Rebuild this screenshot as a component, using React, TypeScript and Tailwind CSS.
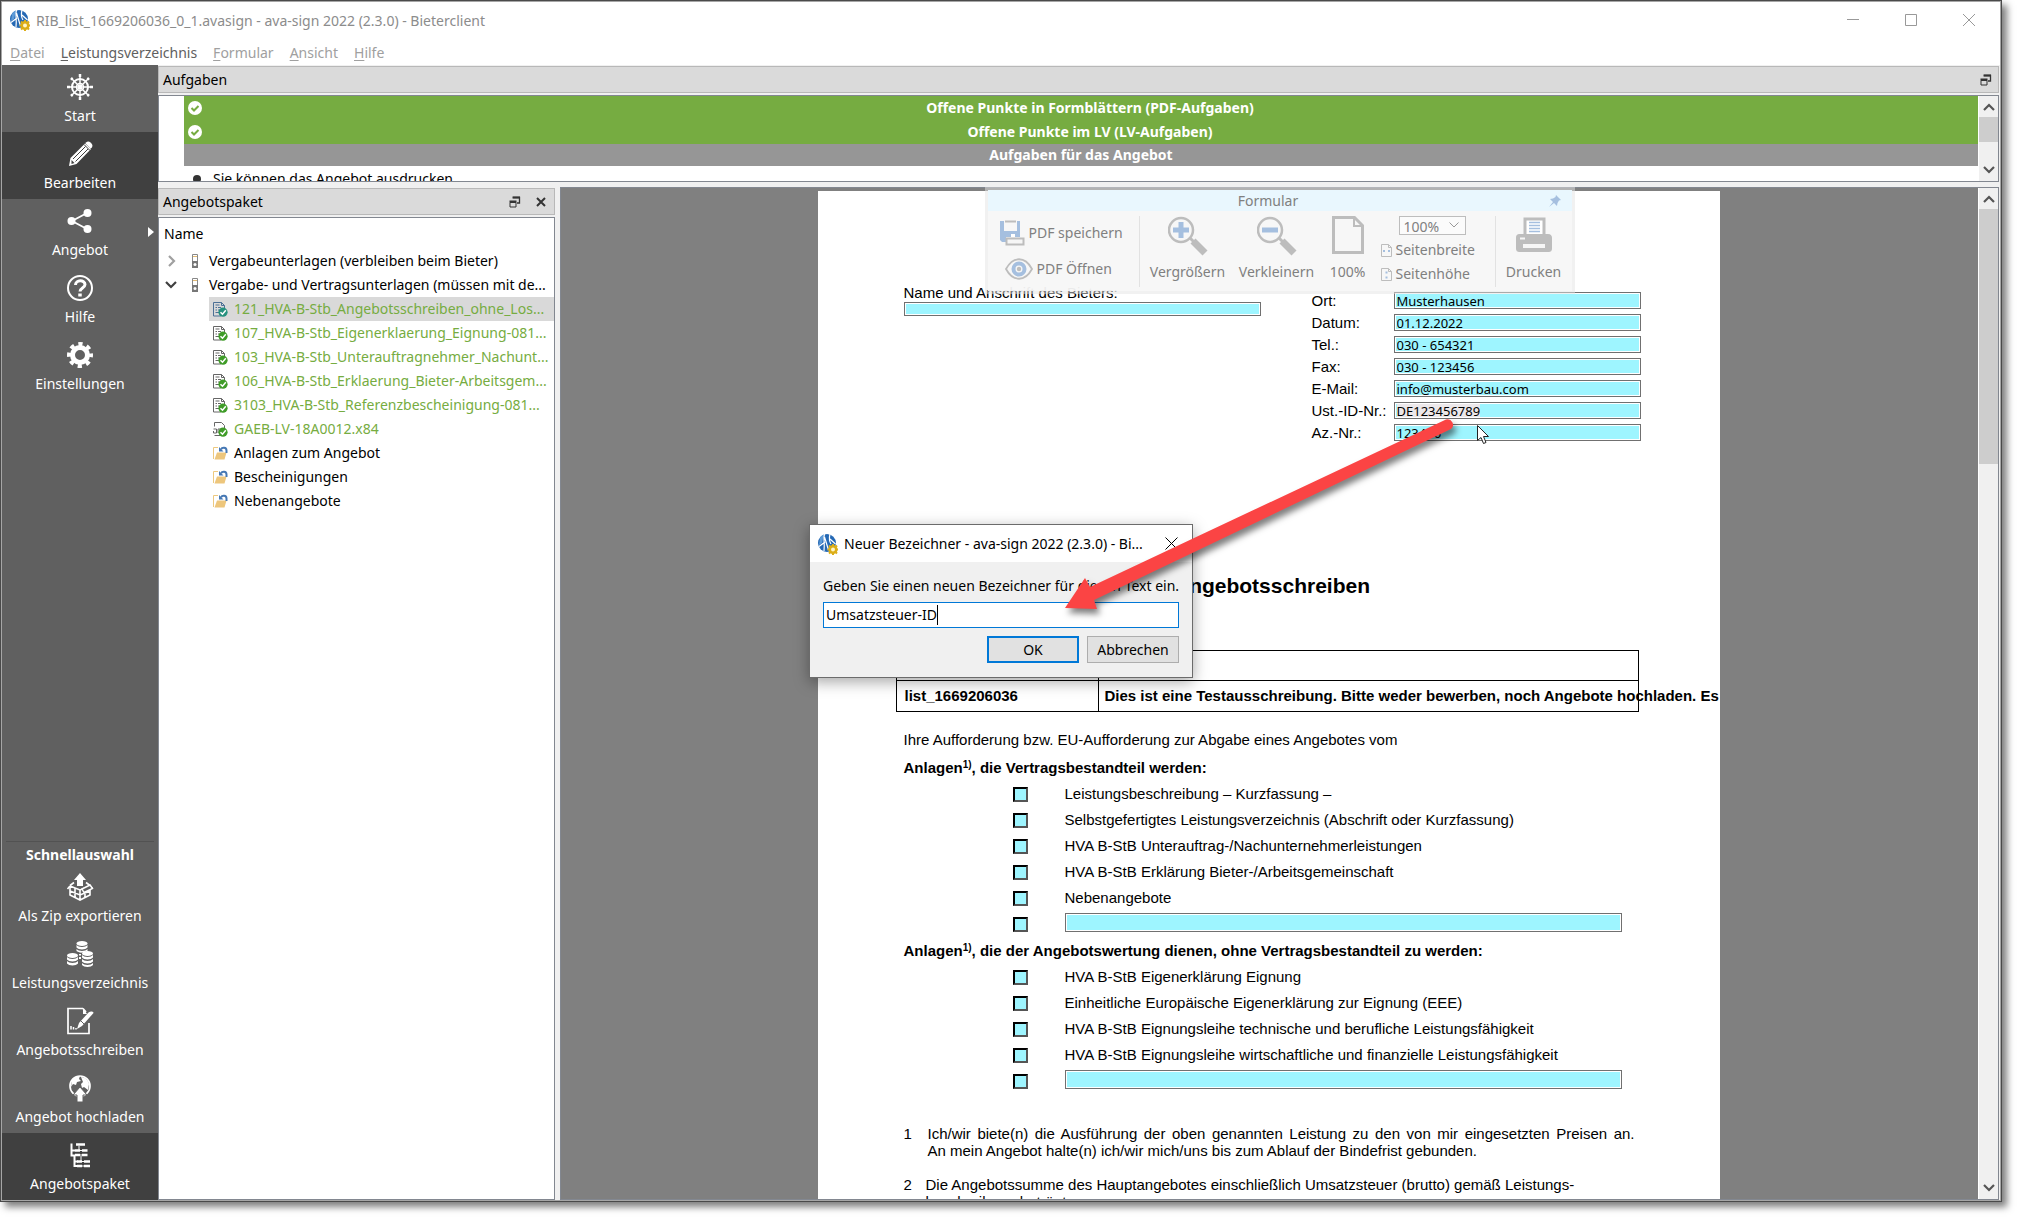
import { useState } from "react";
import type { ReactNode } from "react";

const menuItems = [
  { key: "D", rest: "atei", active: false },
  { key: "L", rest: "eistungsverzeichnis", active: true },
  { key: "F", rest: "ormular", active: false },
  { key: "A", rest: "nsicht", active: false },
  { key: "H", rest: "ilfe", active: false },
];

const openFiles = [
  "121_HVA-B-Stb_Angebotsschreiben_ohne_Los...",
  "107_HVA-B-Stb_Eigenerklaerung_Eignung-081...",
  "103_HVA-B-Stb_Unterauftragnehmer_Nachunt...",
  "106_HVA-B-Stb_Erklaerung_Bieter-Arbeitsgem...",
  "3103_HVA-B-Stb_Referenzbescheinigung-081...",
];

const folders = ["Anlagen zum Angebot", "Bescheinigungen", "Nebenangebote"];

const bidderFields = [
  { label: "Ort:", value: "Musterhausen" },
  { label: "Datum:", value: "01.12.2022" },
  { label: "Tel.:", value: "030 - 654321" },
  { label: "Fax:", value: "030 - 123456" },
  { label: "E-Mail:", value: "info@musterbau.com" },
  { label: "Ust.-ID-Nr.:", value: "DE123456789", marked: true },
  { label: "Az.-Nr.:", value: "123456" },
];

const contractParts = [
  "Leistungsbeschreibung – Kurzfassung –",
  "Selbstgefertigtes Leistungsverzeichnis (Abschrift oder Kurzfassung)",
  "HVA B-StB Unterauftrag-/Nachunternehmerleistungen",
  "HVA B-StB Erklärung Bieter-/Arbeitsgemeinschaft",
  "Nebenangebote",
];

const ratingParts = [
  "HVA B-StB Eigenerklärung Eignung",
  "Einheitliche Europäische Eigenerklärung zur Eignung (EEE)",
  "HVA B-StB Eignungsleihe technische und berufliche Leistungsfähigkeit",
  "HVA B-StB Eignungsleihe wirtschaftliche und finanzielle Leistungsfähigkeit",
];

/* ---------- icons ---------- */

function AppIcon() {
  return (
    <svg viewBox="0 0 20 22" className="w-5 h-[22px] shrink-0">
      <circle cx="9" cy="10" r="9" fill="#2468b4" />
      <path d="M2 5c1-2 2-3 4-3.500L4 10 1 12z" fill="#5d9bd8" />
      <path d="M6.500 1C5 5 7 9 6 18M12 1c-1 4-1 7 1 10M1 13.500l6-4.500M6.500 4l4 13M12 6l5.500 5" stroke="#fff" strokeWidth="1.200" fill="none" />
      <circle cx="15" cy="16.500" r="4.500" fill="#dcae18" />
      <path d="M15 11v11M9.500 16.500h11M11 12.500l8 8M19 12.500l-8 8" stroke="#dcae18" strokeWidth="2" />
      <circle cx="15" cy="16.500" r="2" fill="#fff6c8" />
    </svg>
  );
}

function SideIcon({ children }: { children: ReactNode }) {
  return (
    <svg viewBox="0 0 28 28" className="w-7 h-7" fill="none" stroke="#fff" strokeWidth="2">
      {children}
    </svg>
  );
}

const wheelIcon = (
  <SideIcon>
    <circle cx="14" cy="14" r="8" />
    <circle cx="14" cy="14" r="3.500" strokeWidth="1.500" />
    <path d="M14 2v24M2 14h24M5.500 5.500l17 17M22.500 5.500l-17 17" strokeWidth="1.500" />
    <path d="M14 1v3M14 24v3M1 14h3M24 14h3M5 5l1.500 1.500M21.500 21.500L23 23M23 5l-1.500 1.500M6.500 21.500L5 23" strokeWidth="2.500" />
  </SideIcon>
);

const pencilIcon = (
  <SideIcon>
    <path d="M3 26l1.500-8L19 3.500l6 5.500L10.500 24z" fill="#fff" stroke="none" />
    <path d="M20 2.500c1.500-1.500 3-1.500 4.500 0l1 1c1.500 1.500 1 3 0 4.500l-1 .5-5-5z" fill="#fff" stroke="none" />
    <path d="M7 19L19.500 6.500M9.500 21.500L22 9M18 4.500l6 6" stroke="#404040" strokeWidth="1" />
    <path d="M5.500 20l3 3-3 1z" fill="#404040" stroke="none" />
  </SideIcon>
);

const shareIcon = (
  <SideIcon>
    <path d="M21 6L6 14l15 8" strokeWidth="1.800" />
    <circle cx="21.500" cy="6" r="4" fill="#fff" stroke="none" />
    <circle cx="5.500" cy="14" r="4" fill="#fff" stroke="none" />
    <circle cx="21.500" cy="22" r="4" fill="#fff" stroke="none" />
  </SideIcon>
);

const helpIcon = (
  <SideIcon>
    <circle cx="14" cy="14" r="12" />
    <path d="M9.500 11c0-5.500 9.500-5.500 9.500-.5 0 3.500-5 3.500-5 7" strokeWidth="3" />
    <path d="M14 19.500v3" strokeWidth="3.500" />
  </SideIcon>
);

const gearIcon = (
  <SideIcon>
    <circle cx="14" cy="14" r="7.500" strokeWidth="5" />
    <circle cx="14" cy="14" r="11" strokeWidth="4" strokeDasharray="4.200 4.440" strokeDashoffset="2" />
  </SideIcon>
);

const zipIcon = (
  <SideIcon>
    <path d="M4 13v9l10 5 10-5v-9M14 17v10M4 13l10 4 10-4M4 18l10 4 10-4M9 15v9M19 15v9" strokeWidth="1.600" />
    <path d="M4 13L1.500 16M4 12.500l4-3M24 12.500l-4-3M24 12.500l2.500 3" strokeWidth="1.600" />
    <path d="M14 0l6 7h-3v6h-6V7H8z" fill="#fff" stroke="none" />
    <path d="M16 16l8-4 2.500 3.500-8.500 4z" fill="#606060" strokeWidth="1.400" />
  </SideIcon>
);

const coinsIcon = (
  <SideIcon>
    <g fill="#fff" stroke="none">
      <ellipse cx="16" cy="3.500" rx="5.500" ry="2.500" />
      <path d="M10.500 5c2 2.500 9 2.500 11 0v2.500c-2 2.500-9 2.500-11 0zM10.500 9c2 2.500 9 2.500 11 0v2c-2 1-3 1-5 1.500-2 .5-5-.5-6-1.500z" />
      <ellipse cx="6.500" cy="15.500" rx="5.500" ry="2.500" />
      <path d="M1 17c2 2.500 9 2.500 11 0v2.500c-2 2.500-9 2.500-11 0zM1 21c2 2.500 9 2.500 11 0v2.500c-2 2.500-9 2.500-11 0z" />
      <ellipse cx="21.500" cy="13.500" rx="5.500" ry="2.500" />
      <path d="M16 15c2 2.500 9 2.500 11 0v2.500c-2 2.500-9 2.500-11 0zM16 19c2 2.500 9 2.500 11 0v2.500c-2 2.500-9 2.500-11 0zM16 23c2 2.500 9 2.500 11 0v2c-2 2.500-9 2.500-11 0z" />
      <path d="M13 14h2v1.500h-2zM13 17h2v2h-2z" />
    </g>
  </SideIcon>
);

const letterIcon = (
  <SideIcon>
    <path d="M17 1.500H2v25h21V16M17 1.500L20 5" strokeWidth="1.700" />
    <path d="M17 1v6h4z" fill="#fff" stroke="none" />
    <path d="M11 22l2-6L22.500 5.500c2-1.500 5-1 5 .5L16 19z" fill="#fff" stroke="none" />
    <path d="M14 13l4 4" stroke="#606060" strokeWidth="1" />
    <path d="M5 19v3.500M7.500 20v2.500M10 21v1.500" strokeWidth="1.500" />
  </SideIcon>
);

const uploadIcon = (
  <SideIcon>
    <circle cx="14" cy="12" r="10" strokeWidth="1.700" />
    <path d="M6 6c2-3 5-4 8-4l-1 3 2 2-4 1-1 3-3-1-2 3zM15 3c4 0 7 3 8 7l-1 6-4-3-2 1-1-4 2-2z" fill="#fff" stroke="none" />
    <path d="M14 13l7 8h-4v7h-6v-7H7z" fill="#fff" stroke="#606060" strokeWidth="1" />
  </SideIcon>
);

const treeIcon = (
  <SideIcon>
    <path d="M5.500 2.500v13M5 9.500h4M5 14.500h4M8.500 15v11M8 20.500h4M8 25h4" strokeWidth="2" />
    <path d="M10 3.500h9M9 9.500h5M16 9.500h5.500M9 14h5M16 14h5.500M11 20.500h5M18 20.500h6M11 25h5M18 25h6" strokeWidth="2.600" />
    <path d="M14 9.500h2M14 14h2M16 20.500h2M16 25h2M13 5v4M15 15v5" strokeWidth="1" />
  </SideIcon>
);

function ChevronIcon({ dir, color }: { dir: "up" | "down" | "right"; color: string }) {
  const d = { up: "M1 9l5-5 5 5", down: "M1 3l5 5 5-5", right: "M4 1l5 5-5 5" }[dir];
  return (
    <svg viewBox="0 0 12 12" className="w-3 h-3" fill="none" stroke={color} strokeWidth="2.200">
      <path d={d} />
    </svg>
  );
}

function FloatIcon() {
  return (
    <svg viewBox="0 0 12 12" className="w-3 h-3" fill="none" stroke="#333">
      <path d="M4 1.500h6.500v5.500H8" strokeWidth="1.300" />
      <path d="M1 6.500h6v4.500H1z" />
      <path d="M0.500 5.500h7M3.500 1.500h7.500" strokeWidth="2.200" />
    </svg>
  );
}

function CheckBadge() {
  return (
    <svg viewBox="0 0 14 14" className="w-[14px] h-[14px]">
      <circle cx="7" cy="7" r="7" fill="#fff" />
      <path d="M3.500 7l2.500 2.500 4.500-4.500" stroke="#76ac41" strokeWidth="2" fill="none" />
    </svg>
  );
}

function FileIcon({ selected = false, gaeb = false }: { selected?: boolean; gaeb?: boolean }) {
  const line = selected ? "#4c7096" : "#666";
  return (
    <svg viewBox="0 0 15 15" className="w-[15px] h-[15px] shrink-0" fill="none">
      {gaeb ? (
        <path d="M1.500 4.500v-4h7l3 3v3M0.500 7h3v4h-3V9M5 11V7h3M1.500 13.500h6" stroke={line} />
      ) : (
        <path d="M8 14H0.500V0.500h8l3 3V6M8.500 .5v3h3M2.500 3h4M2.500 5.500h1.500M5 5.500h3M2.500 8h1.500M5 8h2M2.500 10.500h4" stroke={line} />
      )}
      <circle cx="10" cy="10.200" r="4.600" fill={selected ? "#26917e" : "#3f9c28"} />
      <path d="M7.500 10.200l2 2 3.300-4" stroke="#fff" strokeWidth="1.500" />
    </svg>
  );
}

function FolderIcon() {
  return (
    <svg viewBox="0 0 15 14" className="w-[15px] h-[14px] shrink-0">
      <path d="M0.500 13V1.500h4.500" fill="none" stroke="#edc980" />
      <path d="M1.500 13.500L4 6.500h9.500l-2 7z" fill="#edc67c" />
      <path d="M8 3.500c1-2.500 5.500-2.500 5.500 1V7" fill="none" stroke="#4678b4" strokeWidth="2" />
      <path d="M6 1v4.500h4.500z" fill="#4678b4" />
    </svg>
  );
}

function BinderIcon() {
  return (
    <svg viewBox="0 0 6 14" className="w-[6px] h-[14px] shrink-0">
      <path d="M0.500 0.500h5v13h-5z" fill="#fff" stroke="#888" />
      <path d="M1 2.500h4" stroke="#e3ba72" />
      <path d="M0 7h6v7H0z" fill="#777" />
      <circle cx="3" cy="10.500" r="1.500" fill="#fff" />
    </svg>
  );
}

function ZoomIcon({ plus = false }: { plus?: boolean }) {
  return (
    <svg viewBox="0 0 40 40" className="w-10 h-10" fill="none">
      <circle cx="13" cy="14" r="12" stroke="#bdbdbd" strokeWidth="2.500" />
      <path d="M22 22l4 4" stroke="#bdbdbd" strokeWidth="3" />
      <path d="M25 25l12 12" stroke="#bdbdbd" strokeWidth="7" />
      <path d="M5 14h16" stroke="#a5bfdf" strokeWidth="5" />
      {plus && <path d="M13 6v16" stroke="#a5bfdf" strokeWidth="5" />}
    </svg>
  );
}

function PageIcon() {
  return (
    <svg viewBox="0 0 32 38" className="w-8 h-[38px]" fill="none" stroke="#bdbdbd" strokeWidth="3">
      <path d="M1.500 1.500h21l8 8v27h-29z" />
      <path d="M22 2v8h8" strokeWidth="2" />
    </svg>
  );
}

function FitIcon({ vertical = false }: { vertical?: boolean }) {
  return (
    <svg viewBox="0 0 11 13" className="w-[11px] h-[13px]" fill="none" stroke="#bdbdbd">
      <path d="M.5 .5h7l3 3v9H.5zM7.500 .5v3h3" />
      <path d={vertical ? "M5.500 3.500v2M5.500 8.500v2" : "M2 7h2M7 7h2"} stroke="#a5bfdf" strokeWidth="2" />
    </svg>
  );
}

function PrinterIcon() {
  return (
    <svg viewBox="0 0 38 36" className="w-[38px] h-9">
      <path d="M10 18V2h19v16" fill="#fff" stroke="#bdbdbd" strokeWidth="3" />
      <path d="M14 5.500h11M14 8.500h11M14 11.500h11M14 14.500h11" stroke="#a5bfdf" strokeWidth="1.500" />
      <path d="M5 17h28c3 0 4 2 4 4v10c0 3-1 4-4 4H5c-3 0-4-1-4-4V21c0-3 1-4 4-4z" fill="#bdbdbd" />
      <path d="M8 27h22v4H8z" fill="#f6f6f6" />
      <path d="M5 21.500h5" stroke="#f6f6f6" strokeWidth="2" />
    </svg>
  );
}

function SaveIcon() {
  return (
    <svg viewBox="0 0 26 26" className="w-[26px] h-[26px]">
      <path d="M1 1h4v10h13V1h3v16H7v5H3l-2-2z" fill="#a5bfdf" />
      <path d="M6 1.500h11" stroke="#bdbdbd" strokeWidth="2" />
      <path d="M12 14h4v3h-4z" fill="#fff" />
      <path d="M7.500 18.500h17v6h-17z" fill="#f6f6f6" stroke="#bdbdbd" strokeWidth="2" />
    </svg>
  );
}

function EyeIcon() {
  return (
    <svg viewBox="0 0 28 22" className="w-7 h-[22px]" fill="none">
      <path d="M1 11C8-2 20-2 27 11 20 24 8 24 1 11z" stroke="#bdbdbd" strokeWidth="1.800" />
      <circle cx="14" cy="11" r="5.500" stroke="#a5bfdf" strokeWidth="4" />
      <circle cx="14" cy="11" r="2.200" fill="#bdbdbd" />
    </svg>
  );
}

/* ---------- shared pieces ---------- */

function SideButton({ icon, label, active = false }: { icon: ReactNode; label: string; active?: boolean }) {
  return (
    <button
      className={`w-full h-[67px] flex flex-col items-center pt-2 gap-[3px] text-white whitespace-nowrap ${active ? "bg-[#404040]" : ""}`}
    >
      {icon}
      <span className="leading-6">{label}</span>
    </button>
  );
}

function ScrollBar({ thumb }: { thumb: string }) {
  return (
    <div className="w-5 shrink-0 bg-[#f0f0f0] border-l border-white flex flex-col items-center">
      <div className="h-[21px] flex items-center">
        <ChevronIcon dir="up" color="#555" />
      </div>
      <div className={`w-full bg-[#cdcdcd] ${thumb}`} />
      <div className="mt-auto h-[22px] flex items-center">
        <ChevronIcon dir="down" color="#555" />
      </div>
    </div>
  );
}

function DockTitle({ title, closable = false }: { title: string; closable?: boolean }) {
  return (
    <div
      className={`h-[27px] shrink-0 flex items-center bg-[#dadada] border border-[#b8b8b8] pl-1 text-black ${closable ? "pr-2" : "pr-[6px]"}`}
    >
      <span className="flex-1 pt-px">{title}</span>
      <button aria-label="Abdocken">
        <FloatIcon />
      </button>
      {closable && (
        <button aria-label="Schließen" className="ml-[15px]">
          <svg viewBox="0 0 10 10" className="w-[10px] h-[10px]" stroke="#333" strokeWidth="2">
            <path d="M1 1l8 8M9 1L1 9" />
          </svg>
        </button>
      )}
    </div>
  );
}

function Sidebar() {
  return (
    <nav className="w-[156px] shrink-0 bg-[#606060] flex flex-col">
      <SideButton icon={wheelIcon} label="Start" />
      <SideButton icon={pencilIcon} label="Bearbeiten" active />
      <div className="relative">
        <SideButton icon={shareIcon} label="Angebot" />
        <span className="absolute right-1 top-7 border-y-[5px] border-y-transparent border-l-[6px] border-l-white" />
      </div>
      <SideButton icon={helpIcon} label="Hilfe" />
      <SideButton icon={gearIcon} label="Einstellungen" />
      <div className="mt-auto border-t border-[#525252] mx-1 pt-[3px] h-6 flex items-center justify-center font-bold text-white">
        Schnellauswahl
      </div>
      <SideButton icon={zipIcon} label="Als Zip exportieren" />
      <SideButton icon={coinsIcon} label="Leistungsverzeichnis" />
      <SideButton icon={letterIcon} label="Angebotsschreiben" />
      <SideButton icon={uploadIcon} label="Angebot hochladen" />
      <SideButton icon={treeIcon} label="Angebotspaket" active />
    </nav>
  );
}

function TaskPanel() {
  return (
    <section className="flex flex-col gap-[2px]">
      <DockTitle title="Aufgaben" />
      <div className="h-[87px] flex border border-[#828790] bg-white">
        <ul className="flex-1 pl-[25px] overflow-hidden text-center font-bold text-white">
          <li className="h-6 flex items-center bg-[#76ac41] pl-1 pb-px">
            <CheckBadge />
            <span className="flex-1">Offene Punkte in Formblättern (PDF-Aufgaben)</span>
          </li>
          <li className="h-6 flex items-center bg-[#76ac41] pl-1 pb-px">
            <CheckBadge />
            <span className="flex-1">Offene Punkte im LV (LV-Aufgaben)</span>
          </li>
          <li className="h-[22px] flex items-center justify-center bg-[#969696]">Aufgaben für das Angebot</li>
          <li className="h-6 flex items-center gap-3 pl-[9px] pt-px text-black font-normal">
            <span className="w-2 h-2 rounded-full bg-[#333]" />
            Sie können das Angebot ausdrucken
          </li>
        </ul>
        <ScrollBar thumb="h-[25px]" />
      </div>
    </section>
  );
}

function PackageTree() {
  return (
    <section className="w-[397px] shrink-0 flex flex-col gap-[2px] pt-px">
      <DockTitle title="Angebotspaket" closable />
      <div className="flex-1 min-h-0 overflow-hidden border border-[#828790] bg-white text-black whitespace-nowrap">
        <div className="h-[31px] flex items-center pl-[5px]">Name</div>
        <ul>
          <li>
            <button className="h-6 flex items-center pl-[6px]">
              <ChevronIcon dir="right" color="#a0a0a0" />
              <span className="w-[15px]" />
              <BinderIcon />
              <span className="pl-[11px]">Vergabeunterlagen (verbleiben beim Bieter)</span>
            </button>
          </li>
          <li>
            <button className="h-6 flex items-center pl-[6px]">
              <ChevronIcon dir="down" color="#404040" />
              <span className="w-[15px]" />
              <BinderIcon />
              <span className="pl-[11px]">Vergabe- und Vertragsunterlagen (müssen mit de...</span>
            </button>
            <ul className="pl-[50px]">
              {openFiles.map((file, i) => (
                <li key={file} className={i === 0 ? "bg-[#d9d9d9]" : ""}>
                  <button className="h-6 flex items-center gap-[6px] pl-1 text-[#76ac41]">
                    <FileIcon selected={i === 0} />
                    {file}
                  </button>
                </li>
              ))}
              <li>
                <button className="h-6 flex items-center gap-[6px] pl-1 text-[#76ac41]">
                  <FileIcon gaeb />
                  GAEB-LV-18A0012.x84
                </button>
              </li>
              {folders.map((folder) => (
                <li key={folder}>
                  <button className="h-6 flex items-center gap-[6px] pl-1">
                    <FolderIcon />
                    {folder}
                  </button>
                </li>
              ))}
            </ul>
          </li>
        </ul>
      </div>
    </section>
  );
}

/* ---------- PDF page ---------- */

function AttachmentList({ name, items }: { name: string; items: string[] }) {
  return (
    <ul className="mt-[3px] pl-[109px]">
      {items.map((item) => (
        <li key={item} className="h-[26px]">
          <label className="h-full flex items-center gap-[37px]">
            <input type="checkbox" className="appearance-none w-[15px] h-[15px] border-2 border-black border-r-[#555] border-b-[#555] bg-[#9ef5ff]" />
            {item}
          </label>
        </li>
      ))}
      <li className="h-[26px] flex items-center gap-[37px]">
        <input type="checkbox" aria-label={`${name} weitere`} className="appearance-none w-[15px] h-[15px] border-2 border-black border-r-[#555] border-b-[#555] bg-[#9ef5ff]" />
        <input aria-label={name} className="w-[557px] h-[19px] mb-1 border border-[#707070] bg-[#9ef5ff] shadow-[inset_0_0_0_1px_white]" />
      </li>
    </ul>
  );
}

function PdfPage() {
  return (
    <article className="w-[902px] shrink-0 bg-white mt-[3px] mr-[2px] pl-[86px] pr-[79px] pt-[93px] overflow-hidden text-[15px] leading-5 text-black font-['Liberation_Sans',Arial,sans-serif]">
      <div className="flex justify-between items-start">
        <div className="flex flex-col">
          <label htmlFor="bidder" className="leading-[18px]">
            Name und Anschrift des Bieters:
          </label>
          <input id="bidder" className="w-[357px] h-[14px] border border-[#707070] bg-[#9ef5ff] shadow-[inset_0_0_0_1px_white]" />
        </div>
        <div className="mt-2 flex flex-col gap-[5px]">
          {bidderFields.map(({ label, value, marked }) => (
            <div key={label} className="flex items-center h-[17px]">
              <label htmlFor={label} className="w-[82px]">
                {label}
              </label>
              <div className="w-[247px] h-[17px] flex items-center border border-[#707070] bg-[#9ef5ff] shadow-[inset_0_0_0_1px_white] overflow-hidden">
                <input
                  id={label}
                  defaultValue={value}
                  className={`ml-[2px] h-[13px] text-[13px] leading-[13px] font-['Noto_Sans','Open_Sans',sans-serif] ${marked ? "field-sizing-content bg-[#ece8ea]" : "flex-1 min-w-0"}`}
                />
              </div>
            </div>
          ))}
        </div>
      </div>

      <h1 className="mt-[132px] text-center text-[21px] leading-[26px] font-bold">Angebotsschreiben</h1>

      <table className="mt-[51px] -ml-2 w-[743px] table-fixed border-collapse font-bold whitespace-nowrap">
        <tbody>
          <tr className="h-[30px]">
            <td className="w-[202px] border border-black" />
            <td className="border border-black" />
          </tr>
          <tr className="h-[31px]">
            <td className="border border-black pl-2">list_1669206036</td>
            <td className="border border-black pl-[6px]">
              Dies ist eine Testausschreibung. Bitte weder bewerben, noch Angebote hochladen. Es wird
            </td>
          </tr>
        </tbody>
      </table>

      <p className="mt-[18px]">Ihre Aufforderung bzw. EU-Aufforderung zur Abgabe eines Angebotes vom</p>
      <h2 className="mt-2 font-bold">
        Anlagen<sup className="text-[10px]">1)</sup>, die Vertragsbestandteil werden:
      </h2>
      <AttachmentList name="Anlagen Vertragsbestandteil" items={contractParts} />
      <h2 className="mt-1 font-bold">
        Anlagen<sup className="text-[10px]">1)</sup>, die der Angebotswertung dienen, ohne Vertragsbestandteil zu werden:
      </h2>
      <AttachmentList name="Anlagen Angebotswertung" items={ratingParts} />

      <ol className="mt-[31px] mr-[6px] flex flex-col gap-[17px] leading-[17px]">
        <li className="flex">
          <span className="w-6 shrink-0">1</span>
          <p className="flex-1 text-justify">
            Ich/wir biete(n) die Ausführung der oben genannten Leistung zu den von mir eingesetzten Preisen an.
            An&nbsp;mein Angebot halte(n) ich/wir mich/uns bis zum Ablauf der Bindefrist gebunden.
          </p>
        </li>
        <li className="flex">
          <span className="w-[22px] shrink-0">2</span>
          <p className="flex-1">
            Die Angebotssumme des Hauptangebotes einschließlich Umsatzsteuer (brutto) gemäß Leistungs-
            <br />
            beschreibung beträgt:
          </p>
        </li>
      </ol>
    </article>
  );
}

function FormToolbar() {
  return (
    <div className="absolute -top-px left-1/2 -translate-x-1/2 w-[590px] h-[107px] p-[3px] mr-px bg-[#e4e4e4]/50 text-[#808080] text-[14px] whitespace-nowrap">
      <div className="h-full bg-[#f7f7f7]/90 flex flex-col">
        <div className="h-[21px] shrink-0 flex items-center bg-[#e9f7fe] pr-[11px]">
          <span className="flex-1 text-center">Formular</span>
          <svg viewBox="0 0 12 12" className="w-3 h-3">
            <path d="M7 0l5 5-2 .5L8.500 8 8 11 5 8 0 12l4-5-3-3 3-.5L6.500 2z" fill="#a5bfdf" />
          </svg>
        </div>
        <div className="flex-1 flex items-stretch pt-[5px] pb-1">
          <div className="w-[152px] border-r border-[#e2e2e2] flex flex-col gap-3 pl-[11px] pt-[5px]">
            <button className="h-6 flex items-center gap-1">
              <SaveIcon />
              PDF speichern
            </button>
            <button className="h-6 flex items-center gap-1 pl-[6px]">
              <EyeIcon />
              PDF Öffnen
            </button>
          </div>
          <button className="w-[96px] flex flex-col items-center">
            <ZoomIcon plus />
            <span className="mt-[6px]">Vergrößern</span>
          </button>
          <button className="w-[82px] flex flex-col items-center">
            <ZoomIcon />
            <span className="mt-[6px]">Verkleinern</span>
          </button>
          <button className="w-[60px] flex flex-col items-center">
            <PageIcon />
            <span className="mt-2">100%</span>
          </button>
          <div className="flex-1 border-r border-[#e2e2e2] flex flex-col items-start pl-[3px]">
            <div className="relative ml-[18px] h-[19px] w-[67px] border border-[#bdbdbd] bg-[#fbfbfb]">
              <select aria-label="Zoom" className="appearance-none w-full h-full pl-1 leading-4 bg-transparent">
                <option>100%</option>
              </select>
              <svg viewBox="0 0 10 6" className="absolute right-[6px] top-[5px] w-[10px] h-[6px] pointer-events-none" fill="none" stroke="#999">
                <path d="M.5 .5L5 5 9.500 .5" />
              </svg>
            </div>
            <button className="mt-[3px] h-6 flex items-center gap-1">
              <FitIcon />
              Seitenbreite
            </button>
            <button className="h-6 flex items-center gap-1">
              <FitIcon vertical />
              Seitenhöhe
            </button>
          </div>
          <button className="w-[76px] flex flex-col items-center pt-px">
            <PrinterIcon />
            <span className="mt-[9px]">Drucken</span>
          </button>
        </div>
      </div>
    </div>
  );
}

function RenameDialog() {
  const [name, setName] = useState("Umsatzsteuer-ID");

  return (
    <div
      role="dialog"
      aria-labelledby="rename-title"
      className="absolute left-1/2 top-1/2 -translate-x-1/2 -translate-y-1/2 w-[384px] border border-[#6b6b6b] bg-[#f0f0f0] text-black shadow-[0_4px_14px_rgba(0,0,0,0.35)]"
    >
      <div className="h-[37px] flex items-center bg-white pl-2 pr-[14px]">
        <AppIcon />
        <span id="rename-title" className="flex-1 pl-[6px] whitespace-nowrap">
          Neuer Bezeichner - ava-sign 2022 (2.3.0) - Bi...
        </span>
        <button aria-label="Schließen">
          <svg viewBox="0 0 13 13" className="w-[13px] h-[13px]" stroke="#000">
            <path d="M.5 .5l12 12M12.500 .5l-12 12" />
          </svg>
        </button>
      </div>
      <div className="px-[13px] pt-[13px] pb-[14px]">
        <label htmlFor="rename-input" className="block leading-[22px] whitespace-nowrap">
          Geben Sie einen neuen Bezeichner für diesen Text ein.
        </label>
        <div className="mt-[5px] h-[26px] flex items-center border border-[#0078d7] bg-white pl-[2px]">
          <input
            id="rename-input"
            value={name}
            onChange={(e) => setName(e.target.value)}
            className="field-sizing-content outline-none"
          />
          <span className="w-px h-5 bg-black" />
        </div>
        <div className="mt-2 flex justify-end gap-2">
          <button className="w-[92px] h-[27px] border-2 border-[#0078d7] bg-[#e1e1e1]">OK</button>
          <button className="w-[92px] h-[27px] border border-[#adadad] bg-[#e1e1e1]">Abbrechen</button>
        </div>
      </div>

      {/* arrow from the Ust.-ID field to the text box */}
      <svg
        viewBox="0 0 420 220"
        className="absolute left-[240px] top-[-120px] w-[420px] h-[220px] pointer-events-none drop-shadow-[3px_5px_3px_rgba(0,0,0,0.5)]"
      >
        <path
          d="M15 203L35 173 40 182 396 14.500A5.500 5.500 0 0 1 401 24L44 195 47 204z"
          fill="#fb4444"
        />
      </svg>
      <svg viewBox="0 0 12 20" className="absolute left-[667px] top-[-100px] w-3 h-5">
        <path d="M.5 .5v15l3.500-3 2.500 6 2.500-1-2.500-6h5z" fill="#fff" stroke="#222" />
      </svg>
    </div>
  );
}

export default function App() {
  return (
    <div className="h-screen bg-white pr-[15px] pb-[15px] text-[14px] leading-5 font-['Noto_Sans','Open_Sans',sans-serif]">
      <div className="relative h-full border border-[#4a4a4a] bg-[#a6a6a6] p-px shadow-[5px_5px_7px_rgba(0,0,0,0.5)]">
        <div className="h-full flex flex-col bg-[#f0f0f0]">
          <header className="bg-white">
            <div className="h-9 flex items-center pl-2 pr-[2px]">
              <AppIcon />
              <h1 className="flex-1 pl-[6px] pt-px text-[#8c8c8c]">
                RIB_list_1669206036_0_1.avasign - ava-sign 2022 (2.3.0) - Bieterclient
              </h1>
              <button aria-label="Minimieren" className="w-[58px] flex justify-center">
                <svg viewBox="0 0 12 12" className="w-3 h-3" stroke="#999"><path d="M0 5.500h12" /></svg>
              </button>
              <button aria-label="Maximieren" className="w-[58px] flex justify-center">
                <svg viewBox="0 0 12 12" className="w-3 h-3" stroke="#999" fill="none"><path d="M.5 .5h11v11H.5z" /></svg>
              </button>
              <button aria-label="Schließen" className="w-[58px] flex justify-center">
                <svg viewBox="0 0 12 12" className="w-3 h-3" stroke="#999"><path d="M0 0l12 12M12 0L0 12" /></svg>
              </button>
            </div>
            <div className="h-[27px] flex items-center gap-4 pl-2 pt-[2px]">
              {menuItems.map(({ key, rest, active }) => (
                <button key={key} className={active ? "text-[#606060]" : "text-[#a0a0a0]"}>
                  <span className="underline underline-offset-2">{key}</span>
                  {rest}
                </button>
              ))}
            </div>
          </header>

          <div className="flex-1 min-h-0 flex">
            <Sidebar />
            <main className="flex-1 min-w-0 flex flex-col gap-[5px] pt-px pr-px">
              <TaskPanel />
              <div className="flex-1 min-h-0 flex gap-[5px]">
                <PackageTree />
                <section className="relative flex-1 min-w-0 flex border border-[#828790] bg-[#808080]">
                  <div className="flex-1 min-w-0 flex justify-center overflow-hidden">
                    <PdfPage />
                  </div>
                  <ScrollBar thumb="h-[255px]" />
                  <FormToolbar />
                </section>
              </div>
            </main>
          </div>
        </div>

        <RenameDialog />
      </div>
    </div>
  );
}
